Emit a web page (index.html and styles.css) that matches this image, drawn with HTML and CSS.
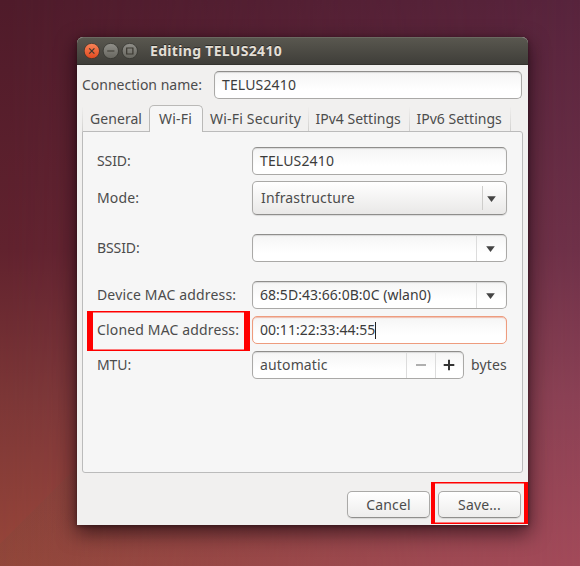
FILE: index.html
```
<!DOCTYPE html>
<html lang="en">
<head>
<meta charset="utf-8">
<title>Editing TELUS2410</title>
<link rel="stylesheet" href="styles.css">
</head>
<body>
<main class="window">
  <header class="titlebar">
    <svg class="controls" width="54" height="16" viewBox="0 0 54 16">
      <defs>
        <linearGradient id="close" x2="0" y2="1"><stop stop-color="#f88458"/><stop offset="1" stop-color="#e1491f"/></linearGradient>
        <linearGradient id="grey" x2="0" y2="1"><stop stop-color="#91908a"/><stop offset="1" stop-color="#66655e"/></linearGradient>
      </defs>
      <g stroke="#34332e" stroke-width=".8">
        <circle cx="7.8" cy="8" r="7.7" fill="url(#close)"/>
        <circle cx="26.8" cy="8" r="7.7" fill="url(#grey)"/>
        <circle cx="45.8" cy="8" r="7.7" fill="url(#grey)"/>
      </g>
      <g fill="none" stroke="#3b3831" stroke-width="1.2">
        <path d="M5.2 5.4l5.2 5.2m0-5.2l-5.2 5.2M23.2 8h7.2"/>
        <path d="M42.7 5h6.2v6h-6.2z"/>
      </g>
    </svg>
    <h1 class="title">Editing TELUS2410</h1>
  </header>

  <div class="name-row">
    <span class="name-label">Connection name:</span>
    <div class="entry strong">TELUS2410</div>
  </div>

  <nav class="tabs">
    <span class="tab general">General</span>
    <span class="tab active">Wi-Fi</span>
    <span class="tab security">Wi-Fi Security</span>
    <span class="tab">IPv4 Settings</span>
    <span class="tab">IPv6 Settings</span>
  </nav>

  <section class="page">
    <div class="row ssid">
      <span class="tight">SSID:</span>
      <div class="entry strong">TELUS2410</div>
    </div>
    <div class="row mode">
      <span>Mode:</span>
      <div class="select">Infrastructure<i class="select-arrow"><svg width="9" height="6" viewBox="0 0 9 6"><path d="M.2.3h8.6L4.5 5.9z"/></svg></i></div>
    </div>
    <div class="row bssid">
      <span class="tight">BSSID:</span>
      <div class="entry"><i class="drop"><svg width="9" height="6" viewBox="0 0 9 6"><path d="M.2.3h8.6L4.5 5.9z"/></svg></i></div>
    </div>
    <div class="row device">
      <span>Device MAC address:</span>
      <div class="entry strong mac">68:5D:43:66:0B:0C (wlan0)<i class="drop"><svg width="9" height="6" viewBox="0 0 9 6"><path d="M.2.3h8.6L4.5 5.9z"/></svg></i></div>
    </div>
    <div class="row cloned">
      <span class="marked">Cloned MAC address:</span>
      <div class="entry strong mac focused">00:11:22:33:44:55<i class="caret"></i></div>
    </div>
    <div class="row mtu">
      <span class="tight">MTU:</span>
      <div class="spin">
        <div class="entry">automatic
          <i class="step minus"><svg width="12" height="12" viewBox="0 0 12 12"><path d="M1 6h10"/></svg></i>
          <i class="step plus"><svg width="12" height="12" viewBox="0 0 12 12"><path d="M.7 6h10.6M6 .7v10.6"/></svg></i>
        </div>
        <span>bytes</span>
      </div>
    </div>
  </section>

  <footer class="actions">
    <div class="button">Cancel</div>
    <div class="button save">Save...</div>
  </footer>
</main>
</body>
</html>
```
FILE: styles.css
```
* { box-sizing: border-box; }

body {
  position: relative;
  z-index: 0;
  margin: 0;
  height: 566px;
  overflow: hidden;
  padding: 37px 52px 0 77px;
  font: 14px/20px "Noto Sans", sans-serif;
  letter-spacing: .15px;
  color: #4c4c4c;
  background:
    linear-gradient(#58243d, #6f3149 44%, #8b4155 70%, #a34a5a);
}

body::before {
  content: "";
  position: absolute;
  inset: 0;
  z-index: -1;
  background:
    linear-gradient(135deg, transparent 47.4%, rgba(110, 75, 60, .16) 47.5%),
    linear-gradient(#4f1b2a, #61222e 44%, #7b3636 70%, #984639);
  -webkit-mask-image: linear-gradient(90deg, #000, transparent);
  mask-image: linear-gradient(90deg, #000, transparent);
}

.window {
  width: 451px;
  height: 488px;
  display: flex;
  flex-direction: column;
  background: #f1f0ef;
  border-radius: 6px 6px 0 0;
  box-shadow: 0 7px 20px 1px rgba(15, 0, 8, .62), 0 1px 4px rgba(10, 0, 5, .4);
}

.titlebar {
  height: 28px;
  display: flex;
  align-items: center;
  padding: 0 8px 0 7px;
  border-radius: 6px 6px 0 0;
  border-top: 1px solid #6b6961;
  border-bottom: 1px solid #34332e;
  background: linear-gradient(#59574f, #3f3e39);
}

.title {
  margin: 0 0 0 12px;
  font-size: 14px;
  line-height: 20px;
  letter-spacing: .32px;
  color: #e3dfd6;
  text-shadow: 0 -1px 0 #2c2b27;
}

.name-row {
  height: 39px;
  flex: none;
  display: grid;
  grid-template-columns: 132px 308px;
  align-items: center;
  padding: 1px 0 0 5px;
}

.name-label { letter-spacing: 0; }

.entry {
  display: flex;
  align-items: center;
  height: 28px;
  padding-left: 7px;
  border: 1px solid #aaa9a7;
  border-top-color: #8f8e8c;
  border-radius: 5px;
  background: linear-gradient(#f5f5f5, #fff 70%);
  box-shadow: inset 0 1px 1px rgba(0, 0, 0, .12);
}

.strong { color: #3c3c3c; }
.mac { letter-spacing: .03px; }
.tight { letter-spacing: -.1px; }

.tabs {
  height: 27px;
  flex: none;
  display: flex;
  align-items: flex-end;
  padding-left: 5px;
}

.tab {
  height: 24px;
  padding: 2px 7px 0;
  width: 101px;
  letter-spacing: 0;
  white-space: nowrap;
  border-right: 1px solid;
  border-image: linear-gradient(#f1f0ef, #d0cfcd) 1;
}

.tab.general { width: 67px; padding-left: 7px; border-width: 0 0 0 1px; border-left-style: solid; letter-spacing: .06px; }
.tab.security { width: 105.5px; letter-spacing: .2px; }

.tab.active {
  position: relative;
  z-index: 1;
  width: 54px;
  height: 27px;
  margin-bottom: -1px;
  padding: 3px 0 0 9px;
  letter-spacing: .2px;
  border: 1px solid #bab9b7;
  border-bottom: 0;
  border-image: none;
  border-radius: 5px 5px 0 0;
  background: #f6f6f6;
}

.page {
  width: 441px;
  height: 342px;
  flex: none;
  display: flex;
  flex-direction: column;
  margin-left: 5px;
  padding: 15px 0 0 14px;
  border: 1px solid #bbb;
  border-radius: 0 3px 3px 3px;
  background: #f6f6f6;
}

.row {
  display: grid;
  grid-template-columns: 155px 255px;
  align-items: center;
  flex: none;
}

.ssid > span { margin-top: -1px; }
.mode { margin-top: 6px; }
.bssid { margin-top: 19px; }
.device { margin-top: 19px; }
.cloned { margin-top: 7px; }
.mtu { margin-top: 7px; }

.select {
  height: 34px;
  display: flex;
  align-items: center;
  padding: 0 0 0 8px;
  border: 1px solid #aaa9a7;
  border-bottom-color: #8f8e8c;
  border-radius: 5px;
  background: linear-gradient(#fff, #e9e8e7);
  box-shadow: 0 1px 1px rgba(0, 0, 0, .12);
}

.select-arrow {
  display: flex;
  align-items: center;
  width: 24px;
  height: 24px;
  margin-left: auto;
  padding: 2px 0 0 4px;
  border-left: 1px solid #cecdcb;
}

.drop {
  display: flex;
  align-items: center;
  align-self: stretch;
  width: 30px;
  margin-left: auto;
  padding: 2px 0 0 9px;
  border-left: 1px solid #dcdcdc;
}

.select-arrow path, .drop path { fill: #444; }

.marked {
  width: 163px;
  height: 40px;
  margin: -5px 0 -7px -10px;
  padding: 8px 0 0 4px;
  white-space: nowrap;
  border: solid #f00;
  border-width: 1px 6px;
  box-shadow: inset 0 1px rgba(255, 0, 0, .5), inset 0 -1px rgba(255, 0, 0, .5);
}

.focused {
  border-color: #ee9c7e;
  box-shadow: inset 0 1px 1px rgba(225, 90, 45, .35);
}

.caret { width: 1px; height: 17px; background: #222; }

.spin { display: flex; align-items: center; gap: 7px; }
.spin .entry { width: 212px; }

.step {
  display: flex;
  align-items: center;
  justify-content: center;
  align-self: stretch;
  width: 29px;
  border-left: 1px solid #dcdcdc;
}

.minus { margin-left: auto; padding-right: 1px; }
.plus { width: 28px; padding-right: 1px; }
.minus path { stroke: #969696; stroke-width: 1.5; }
.plus path { stroke: #333; stroke-width: 2; }

.actions {
  display: flex;
  justify-content: flex-end;
  align-items: flex-start;
  gap: 8px;
  padding: 18px 7px 0 0;
}

.button {
  position: relative;
  width: 83px;
  height: 27px;
  padding-top: 3px;
  text-align: center;
  border: 1px solid #aaa9a7;
  border-bottom-color: #908f8d;
  border-radius: 5px;
  background: linear-gradient(#fff, #eeedec);
  box-shadow: 0 1px 1px rgba(0, 0, 0, .1);
}

.save::after {
  content: "";
  position: absolute;
  inset: -10px -8px -7px;
  border: solid #f00;
  border-width: 1px 4px;
  box-shadow: inset 0 1px rgba(255, 0, 0, .5), inset 0 -1px rgba(255, 0, 0, .5);
}
```
